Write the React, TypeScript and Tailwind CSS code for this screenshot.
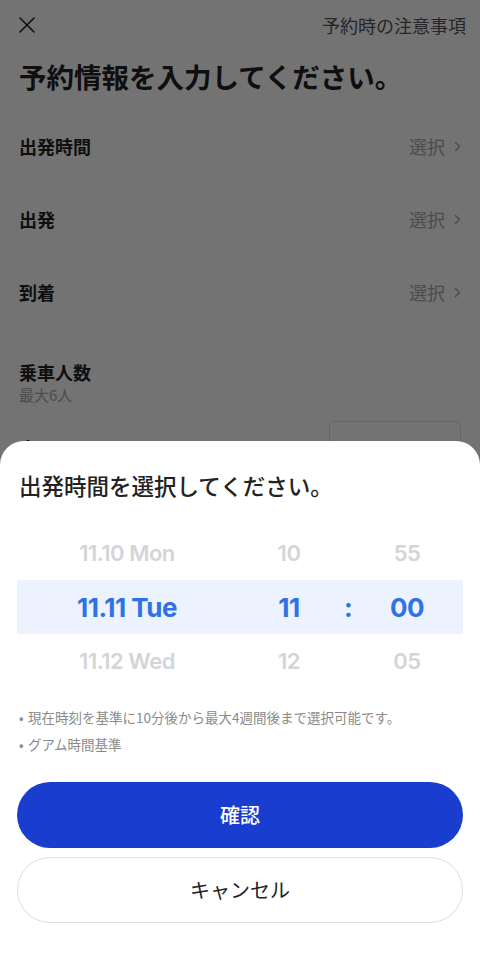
import React from "react";

const JP = { fontFamily: '"Noto Sans CJK JP", "Noto Sans", sans-serif' };
const NUM = { fontFamily: 'Inter, "Noto Sans CJK JP", sans-serif' };

function Chevron() {
  return (
    <svg width="7" height="11" viewBox="0 0 7 11" fill="none" className="ml-[9px]">
      <path d="M1.5 1.5 L5.5 5.5 L1.5 9.5" stroke="#a8a8a8" strokeWidth="1.5" strokeLinecap="round" strokeLinejoin="round" />
    </svg>
  );
}

function Row({ label }: { label: string }) {
  return (
    <div className="h-[73px] flex items-center justify-between px-[19px]">
      <span className="text-[18px] font-semibold text-[#222]">{label}</span>
      <span className="flex items-center text-[18px] text-[#a8a8a8]">
        選択
        <Chevron />
      </span>
    </div>
  );
}

export default function App() {
  const cols = [
    { w: "w-[220px]", top: "11.10 Mon", mid: "11.11 Tue", bot: "11.12 Wed" },
    { w: "w-[104px]", top: "10", mid: "11", bot: "12" },
    { w: "w-[14px]", top: "", mid: ":", bot: "" },
    { w: "w-[104px]", top: "55", mid: "00", bot: "05" },
  ];
  return (
    <div className="relative h-[960px] w-[480px] overflow-hidden bg-white" style={JP}>
      {/* background page */}
      <div className="h-[50px] flex items-center justify-between pl-[19px] pr-[14px]">
        <svg width="16" height="16" viewBox="0 0 16 16" fill="none">
          <path d="M1 1 L15 15 M15 1 L1 15" stroke="#222" strokeWidth="1.6" strokeLinecap="round" />
        </svg>
        <span className="text-[18px] text-[#555]">予約時の注意事項</span>
      </div>
      <h1 className="mt-[8px] px-[19px] text-[27.5px] leading-[36px] font-bold text-[#222]">予約情報を入力してください。</h1>
      <div className="mt-[16px]">
        <Row label="出発時間" />
        <Row label="出発" />
        <Row label="到着" />
      </div>
      <div className="px-[19px] pt-[30px]">
        <div className="text-[18px] leading-[26px] font-semibold text-[#222]">乗車人数</div>
        <div className="text-[15px] leading-[20px] text-[#aaa]">最大6人</div>
      </div>
      <div className="flex items-start justify-between px-[19px] mt-[16px]">
        <span className="mt-[14px] text-[18px] font-semibold text-[#222]">大人</span>
        <div className="h-[50px] w-[132px] rounded-md border border-[#ddd]" />
      </div>

      {/* dim overlay */}
      <div className="absolute inset-0 bg-black/55" />

      {/* bottom sheet */}
      <div className="absolute bottom-0 left-0 right-0 h-[519px] rounded-t-[24px] bg-white">
        <h2 className="px-[19px] pt-[29px] text-[22.5px] leading-[30px] font-medium text-[#222]">出発時間を選択してください。</h2>
        <div className="mt-[26px] mx-[17px]">
          {(["top", "mid", "bot"] as const).map((k) => (
            <div key={k} className={`h-[54px] flex items-center ${k === "mid" ? "bg-[#ecf3fe]" : ""}`}>
              {cols.map((c, i) => (
                <div
                  key={i}
                  className={`${c.w} text-center ${k === "mid" ? "text-[26px] font-bold text-[#2f72e6] tracking-[-0.5px]" : "text-[22px] font-semibold text-[#d4d5d8] tracking-[-0.5px]"}`}
                  style={NUM}
                >
                  {c[k]}
                </div>
              ))}
            </div>
          ))}
        </div>
        <ul className="mt-[16px] px-[19px] text-[13.5px] leading-[27px] text-[#8a8a8a]">
          <li className="flex"><span className="w-[9px]">•</span>現在時刻を基準に10分後から最大4週間後まで選択可能です。</li>
          <li className="flex"><span className="w-[9px]">•</span>グアム時間基準</li>
        </ul>
        <div className="mt-[24px] px-[17px] flex flex-col gap-[9px]">
          <button className="h-[66px] rounded-full bg-[#183dcf] text-white text-[20px] font-medium">確認</button>
          <button className="h-[66px] rounded-full border border-[#dedede] bg-white text-[#222] text-[20px] font-normal">キャンセル</button>
        </div>
      </div>
    </div>
  );
}
